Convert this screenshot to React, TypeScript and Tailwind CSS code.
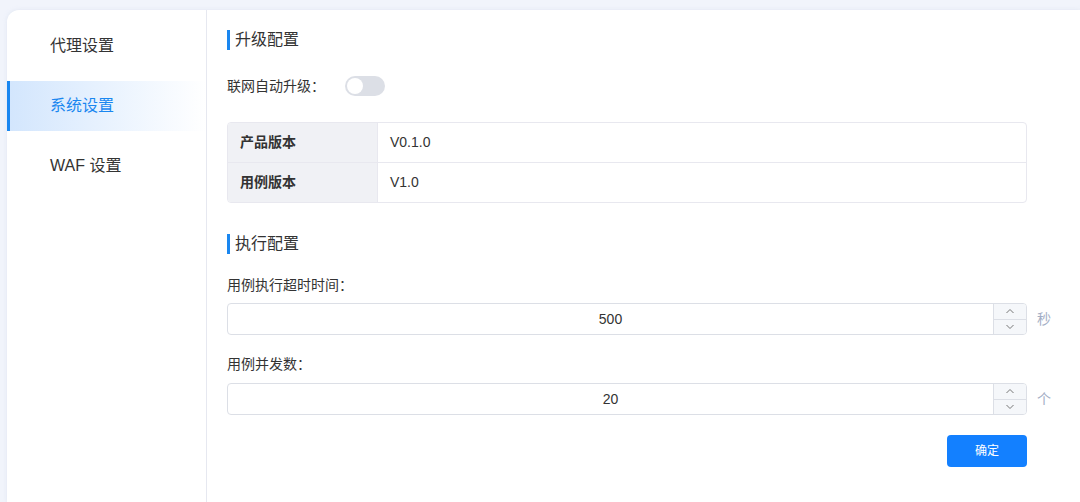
import React, { useState } from 'react';

const menu = ['代理设置', '系统设置', 'WAF 设置'];

function SectionTitle({ children }: { children: React.ReactNode }) {
  return (
    <div className="flex items-center h-5">
      <span className="w-[3px] h-5 bg-[#1a87f0]" />
      <span className="ml-[5px] text-[16px] text-[#333]">{children}</span>
    </div>
  );
}

function NumberInput({ value, unit }: { value: number; unit: string }) {
  return (
    <div className="flex items-center">
      <div className="flex shrink-0 w-[800px] h-8 border border-[#dcdfe6] rounded-[4px] overflow-hidden">
        <div className="flex-1 flex items-center justify-center text-[14px] text-[#333]">{value}</div>
        <div className="w-[33px] flex flex-col border-l border-[#dcdfe6] bg-[#f5f7fa]">
          <div className="flex-1 flex items-center justify-center border-b border-[#dcdfe6]">
            <svg width="10" height="6" viewBox="0 0 10 6" fill="none">
              <path d="M1.5 5L5 1.5L8.5 5" stroke="#777" strokeWidth="1" />
            </svg>
          </div>
          <div className="flex-1 flex items-center justify-center">
            <svg width="10" height="6" viewBox="0 0 10 6" fill="none">
              <path d="M1.5 1L5 4.5L8.5 1" stroke="#777" strokeWidth="1" />
            </svg>
          </div>
        </div>
      </div>
      <span className="ml-[10px] text-[14px] text-[#a3aec5]">{unit}</span>
    </div>
  );
}

export default function App() {
  const [active] = useState(1);
  const [autoUpgrade, setAutoUpgrade] = useState(false);

  return (
    <div
      className="w-[1080px] h-[502px] bg-[#f1f4fb] pl-[7px] pt-[10px] overflow-hidden"
      style={{ fontFamily: '"Liberation Sans", "Noto Sans CJK SC", sans-serif' }}
    >
      <div className="flex h-full bg-white rounded-tl-[12px] shadow-[0_0_4px_rgba(200,210,230,0.4)]">
        {/* sidebar */}
        <div className="w-[200px] shrink-0 border-r border-[#e6e8f0] pt-[11px] flex flex-col gap-[10px]">
          {menu.map((m, i) => (
            <div
              key={m}
              className={
                i === active
                  ? 'h-[50px] flex items-center pl-10 border-l-[3px] border-[#1a87f0] bg-gradient-to-r from-[#d3e6fd] to-white text-[16px] text-[#1a87f0]'
                  : 'h-[50px] flex items-center pl-[43px] text-[16px] text-[#333]'
              }
            >
              {m}
            </div>
          ))}
        </div>

        {/* content */}
        <div className="pl-5 pt-5 flex-1">
          <SectionTitle>升级配置</SectionTitle>

          <div className="flex items-center mt-[26px] h-5">
            <span className="text-[14px] text-[#333]">联网自动升级：</span>
            <button
              onClick={() => setAutoUpgrade(!autoUpgrade)}
              className={`ml-[20px] w-10 h-5 rounded-full p-[2px] flex ${autoUpgrade ? 'bg-[#1a87f0] justify-end' : 'bg-[#dcdfe6] justify-start'}`}
            >
              <span className="w-4 h-4 rounded-full bg-white" />
            </button>
          </div>

          <div className="mt-[26px] w-[800px] border border-[#e8e8ef] rounded-[4px] overflow-hidden">
            <div className="flex h-10 border-b border-[#e8e8ef]">
              <div className="w-[150px] bg-[#f0f1f5] border-r border-[#e8e8ef] flex items-center pl-3 text-[14px] font-bold text-[#333]">产品版本</div>
              <div className="flex-1 flex items-center pl-3 text-[14px] text-[#333]">V0.1.0</div>
            </div>
            <div className="flex h-[39px]">
              <div className="w-[150px] bg-[#f0f1f5] border-r border-[#e8e8ef] flex items-center pl-3 text-[14px] font-bold text-[#333]">用例版本</div>
              <div className="flex-1 flex items-center pl-3 text-[14px] text-[#333]">V1.0</div>
            </div>
          </div>

          <div className="mt-[31px]">
            <SectionTitle>执行配置</SectionTitle>
          </div>

          <div className="mt-[21px] text-[14px] text-[#333] leading-5">用例执行超时时间：</div>
          <div className="mt-[8px]">
            <NumberInput value={500} unit="秒" />
          </div>

          <div className="mt-[19px] text-[14px] text-[#333] leading-5">用例并发数：</div>
          <div className="mt-[9px]">
            <NumberInput value={20} unit="个" />
          </div>

          <div className="w-[800px] flex justify-end mt-5">
            <button className="w-20 h-8 rounded-[4px] bg-[#1380ff] text-white text-[12px]">确定</button>
          </div>
        </div>
      </div>
    </div>
  );
}
